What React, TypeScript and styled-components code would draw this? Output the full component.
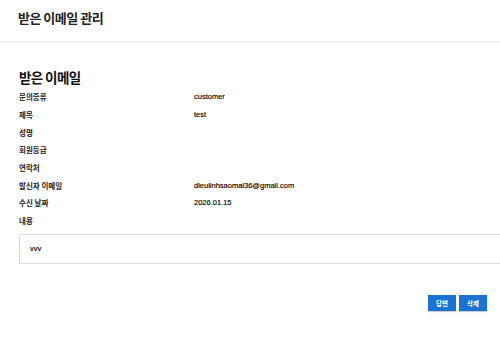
import React from "react";
import styled, { createGlobalStyle } from "styled-components";

const Global = createGlobalStyle`
  html, body { margin: 0; padding: 0; background: #fff; overflow: hidden; }
  body { font-family: "Noto Sans CJK KR", "Noto Sans", sans-serif; color: #222; }
`;

const Page = styled.div`
  width: 500px;
  height: 346px;
  overflow: hidden;
`;

const Header = styled.header`
  height: 42px;
  box-sizing: border-box;
  border-bottom: 1px solid #e6e6e6;
  box-shadow: 0 1px 2px rgba(0, 0, 0, 0.04);
  display: flex;
  align-items: center;
  padding: 0 18px 6px;
`;

const HeaderTitle = styled.h1`
  margin: 0;
  font-size: 13px;
  font-weight: 700;
  color: #222;
  letter-spacing: -0.5px;
`;

const Main = styled.main`
  padding: 24px 0 0 19px;
`;

const SectionTitle = styled.h2`
  margin: 0;
  font-size: 13.5px;
  line-height: 22px;
  font-weight: 700;
  color: #111;
  letter-spacing: -0.6px;
`;

const Row = styled.div`
  display: grid;
  grid-template-columns: 175px 1fr;
  height: 17.7px;
  align-items: center;
  font-size: 7.5px;
  color: #222;
`;

const Label = styled.span`
  font-weight: 600;
`;

const Value = styled.span`
  font-family: "Liberation Sans", Arial, sans-serif;
  font-size: 7.5px;
  color: #000;
  -webkit-text-stroke: 0.15px #000;
`;

const ContentBox = styled.div`
  box-sizing: content-box;
  width: 100%;
  height: 28px;
  margin-top: 4px;
  padding: 0 10px;
  border: 1px solid #dcdcdc;
  display: flex;
  align-items: center;
  font-family: "Liberation Sans", Arial, sans-serif;
  font-size: 7.5px;
  color: #000;
  -webkit-text-stroke: 0.15px #000;
`;

const Actions = styled.div`
  display: flex;
  justify-content: flex-end;
  gap: 3px;
  padding: 31px 13px 0 0;
`;

const Button = styled.button`
  width: 28px;
  height: 16px;
  border: none;
  padding: 0;
  background: #1a73d2;
  color: #fff;
  font-family: "Noto Sans CJK KR", sans-serif;
  font-size: 6.5px;
  font-weight: 700;
  box-shadow: 0 1px 1px rgba(0, 0, 0, 0.2);
  cursor: pointer;
`;

const rows: [string, string][] = [
  ["문의종류", "customer"],
  ["제목", "test"],
  ["성명", ""],
  ["회원등급", ""],
  ["연락처", ""],
  ["발신자 이메일", "dieulinhsaomai36@gmail.com"],
  ["수신 날짜", "2026.01.15"],
  ["내용", ""],
];

export default function App() {
  return (
    <Page>
      <Global />
      <Header>
        <HeaderTitle>받은 이메일 관리</HeaderTitle>
      </Header>
      <Main>
        <SectionTitle>받은 이메일</SectionTitle>
        {rows.map(([l, v]) => (
          <Row key={l}>
            <Label>{l}</Label>
            <Value>{v}</Value>
          </Row>
        ))}
        <ContentBox>vvv</ContentBox>
        <Actions>
          <Button>답변</Button>
          <Button>삭제</Button>
        </Actions>
      </Main>
    </Page>
  );
}
